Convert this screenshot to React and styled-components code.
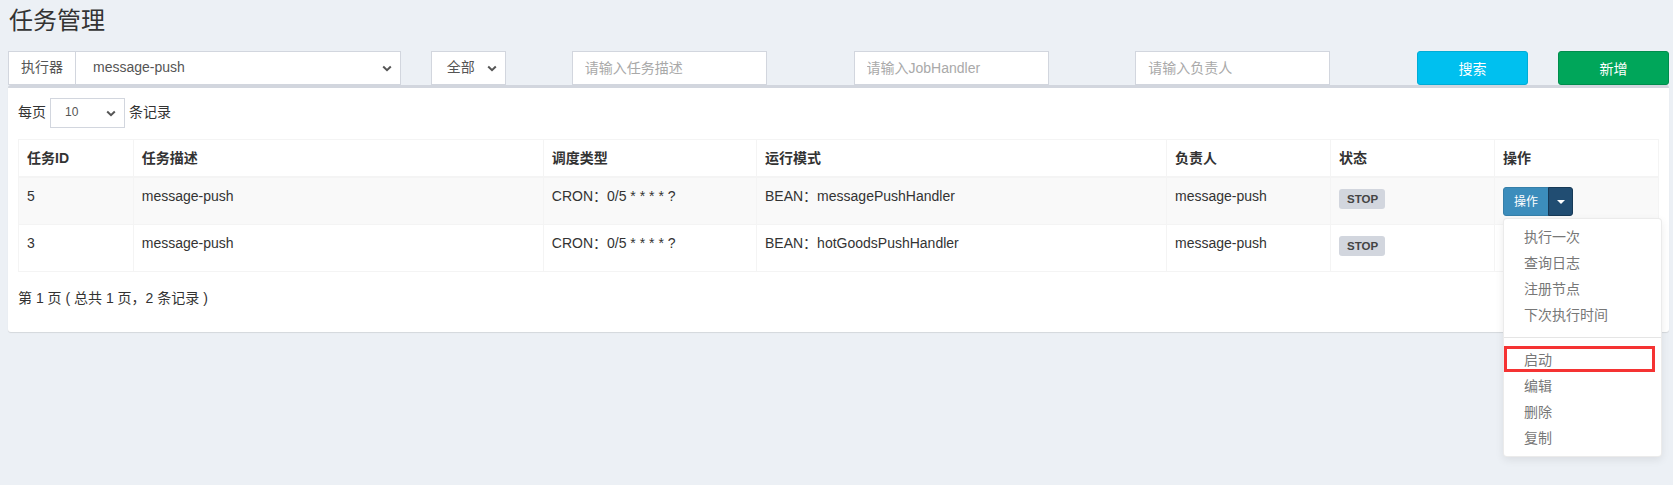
import React from 'react';
import styled, { createGlobalStyle } from 'styled-components';

const GlobalStyle = createGlobalStyle`
  html, body { margin: 0; padding: 0; background: #ecf0f5; }
  body {
    font-family: "Liberation Sans", "Noto Sans CJK SC", sans-serif;
    font-size: 14px;
    line-height: 1.42857;
    color: #333;
  }
  * { box-sizing: border-box; }
`;

const Page = styled.div`
  min-height: 485px;
  padding: 0 4px 0 8px;
`;

const Header = styled.header`
  padding-top: 8px;
  margin-bottom: 17px;
`;

const Title = styled.h1`
  margin: 0;
  padding-left: 1px;
  font-size: 24px;
  line-height: 26px;
  font-weight: 400;
  color: #333;
`;

const FilterRow = styled.div`
  display: grid;
  grid-template-columns: repeat(12, minmax(0, 1fr));
  column-gap: 30px;
  height: 34px;
`;

const Col = styled.div`
  grid-column: span ${(p) => p.$span};
  display: flex;
`;

const InputGroup = styled.div`
  display: flex;
  width: 100%;
  height: 34px;
`;

const Addon = styled.span`
  display: flex;
  align-items: center;
  padding: 0 12px;
  border: 1px solid #d2d6de;
  background: #fff;
  color: #555;
  font-size: 14px;
  white-space: nowrap;
`;

const FakeSelect = styled.div`
  display: flex;
  align-items: center;
  flex: ${(p) => (p.$grow ? 1 : 'none')};
  width: ${(p) => (p.$grow ? 'auto' : `${p.$w}px`)};
  height: ${(p) => p.$h}px;
  margin-left: ${(p) => (p.$joined ? '-1px' : '0')};
  padding: 0 8px 0 ${(p) => p.$pl}px;
  border: 1px solid #d2d6de;
  background: #fff;
  color: #555;
  font-size: ${(p) => p.$fs}px;
  cursor: default;
`;

const SelectValue = styled.span`
  flex: 1;
  white-space: nowrap;
`;

const Chevron = styled.svg`
  flex: none;
  width: 10px;
  height: 7px;
`;

const TextInput = styled.input`
  width: 195px;
  height: 34px;
  padding: 6px 12px;
  border: 1px solid #d2d6de;
  background: #fff;
  font-family: inherit;
  font-size: 14px;
  color: #555;
  outline: none;
  &::placeholder { color: #a9a9a9; }
`;

const ActionButton = styled.button`
  width: 100%;
  height: 34px;
  border-radius: 3px;
  border: 1px solid ${(p) => (p.$variant === 'info' ? '#00acd6' : '#008d4c')};
  background: ${(p) => (p.$variant === 'info' ? '#00c0ef' : '#00a65a')};
  color: #fff;
  font-family: inherit;
  font-size: 14px;
  cursor: pointer;
`;

const Box = styled.section`
  background: #fff;
  border-top: 3px solid #d2d6de;
  border-radius: 3px;
  box-shadow: 0 1px 1px rgba(0, 0, 0, 0.1);
  padding: 10px;
  overflow: visible;
`;

const LengthRow = styled.div`
  display: flex;
  align-items: center;
  height: 30px;
  gap: 4px;
  color: #333;
`;

const Table = styled.table`
  width: 100%;
  margin-top: 11px;
  border-collapse: collapse;
  table-layout: fixed;
  border: 1px solid #f4f4f4;
`;

const ColDef = styled.col`
  width: ${(p) => p.$w}%;
`;

const Th = styled.th`
  text-align: left;
  padding: 8px;
  line-height: 20px;
  font-weight: 700;
  color: #333;
  border: 1px solid #f4f4f4;
  border-bottom-width: 2px;
  vertical-align: bottom;
`;

const Tr = styled.tr`
  background: ${(p) => (p.$striped ? '#f9f9f9' : '#fff')};
`;

const Td = styled.td`
  padding: 8px;
  line-height: 20px;
  color: #333;
  border: 1px solid #f4f4f4;
  vertical-align: top;
  white-space: nowrap;
  overflow: visible;
`;

const StatusLabel = styled.span`
  display: inline-block;
  margin-top: 3px;
  height: 20px;
  padding: 0 7px 0 8px;
  border-radius: 3px;
  background: #d2d6de;
  color: #444;
  font-size: 11.5px;
  font-weight: 700;
  line-height: 20px;
  vertical-align: top;
`;

const BtnGroup = styled.div`
  position: relative;
  display: inline-flex;
  margin-top: 1px;
  z-index: ${(p) => (p.$open ? 5 : 1)};
`;

const BtnMain = styled.button`
  height: 29px;
  padding: 0 10px;
  border: 1px solid #367fa9;
  border-radius: 3px 0 0 3px;
  background: #3c8dbc;
  color: #fff;
  font-family: inherit;
  font-size: 12px;
  line-height: 18px;
  cursor: pointer;
`;

const BtnCaret = styled.button`
  display: flex;
  align-items: center;
  justify-content: center;
  width: 25px;
  height: 29px;
  margin-left: -1px;
  border: 1px solid ${(p) => (p.$open ? '#173a57' : '#367fa9')};
  border-radius: 0 3px 3px 0;
  background: ${(p) => (p.$open ? '#214d72' : '#3c8dbc')};
  cursor: pointer;
  &::after {
    content: '';
    border-top: 4px solid #fff;
    border-left: 4px solid transparent;
    border-right: 4px solid transparent;
  }
`;

const Menu = styled.ul`
  position: absolute;
  top: calc(100% + 2px);
  left: 0;
  min-width: 159px;
  margin: 0;
  padding: 5px 0;
  list-style: none;
  background: #fff;
  border: 1px solid rgba(0, 0, 0, 0.08);
  border-radius: 4px;
  box-shadow: 0 3px 8px rgba(0, 0, 0, 0.08);
`;

const MenuItem = styled.li`
  position: relative;
  padding: 3px 20px;
  line-height: 20px;
  font-size: 14px;
  color: #777;
  white-space: nowrap;
  cursor: pointer;
  &::after {
    content: '';
    display: ${(p) => (p.$marked ? 'block' : 'none')};
    position: absolute;
    top: -1px;
    left: 0;
    right: 6px;
    bottom: 1px;
    border: 3px solid #f53333;
  }
`;

const Divider = styled.li`
  height: 1px;
  margin: 9px 0;
  background: #e5e5e5;
`;

const Info = styled.div`
  margin: 8px 0 6px;
  padding: 8px 0;
  line-height: 20px;
  color: #333;
`;

const ChevronIcon = () => (
  <Chevron viewBox="0 0 10 7">
    <polyline points="1.2,1.5 5,5.2 8.8,1.5" fill="none" stroke="#555" strokeWidth="2" />
  </Chevron>
);

const Select = ({ value, ...rest }) => (
  <FakeSelect {...rest}>
    <SelectValue>{value}</SelectValue>
    <ChevronIcon />
  </FakeSelect>
);

const columns = [
  { label: '任务ID', w: 7 },
  { label: '任务描述', w: 25 },
  { label: '调度类型', w: 13 },
  { label: '运行模式', w: 25 },
  { label: '负责人', w: 10 },
  { label: '状态', w: 10 },
  { label: '操作', w: 10 },
];

const rows = [
  { id: 5, desc: 'message-push', cron: 'CRON：0/5 * * * * ?', mode: 'BEAN：messagePushHandler', owner: 'message-push', open: true },
  { id: 3, desc: 'message-push', cron: 'CRON：0/5 * * * * ?', mode: 'BEAN：hotGoodsPushHandler', owner: 'message-push', open: false },
];

const menuTop = ['执行一次', '查询日志', '注册节点', '下次执行时间'];
const menuBottom = ['启动', '编辑', '删除', '复制'];

export default function App() {
  return (
    <>
      <GlobalStyle />
      <Page>
        <Header>
          <Title>任务管理</Title>
        </Header>
        <FilterRow>
          <Col $span={3}>
            <InputGroup>
              <Addon>执行器</Addon>
              <Select value="message-push" $grow $joined $h={34} $pl={17} $fs={14} />
            </InputGroup>
          </Col>
          <Col $span={1}>
            <Select value="全部" $w={75} $h={34} $pl={15} $fs={14} />
          </Col>
          <Col $span={2}>
            <TextInput placeholder="请输入任务描述" />
          </Col>
          <Col $span={2}>
            <TextInput placeholder="请输入JobHandler" />
          </Col>
          <Col $span={2}>
            <TextInput placeholder="请输入负责人" />
          </Col>
          <Col $span={1}>
            <ActionButton $variant="info">搜索</ActionButton>
          </Col>
          <Col $span={1}>
            <ActionButton $variant="success">新增</ActionButton>
          </Col>
        </FilterRow>
        <Box>
          <LengthRow>
            <span>每页</span>
            <Select value="10" $w={75} $h={30} $pl={14} $fs={12} />
            <span>条记录</span>
          </LengthRow>
          <Table>
            <colgroup>
              {columns.map((c) => (
                <ColDef key={c.label} $w={c.w} />
              ))}
            </colgroup>
            <thead>
              <tr>
                {columns.map((c) => (
                  <Th key={c.label}>{c.label}</Th>
                ))}
              </tr>
            </thead>
            <tbody>
              {rows.map((r, i) => (
                <Tr key={r.id} $striped={i % 2 === 0}>
                  <Td>{r.id}</Td>
                  <Td>{r.desc}</Td>
                  <Td>{r.cron}</Td>
                  <Td>{r.mode}</Td>
                  <Td>{r.owner}</Td>
                  <Td>
                    <StatusLabel>STOP</StatusLabel>
                  </Td>
                  <Td>
                    <BtnGroup $open={r.open}>
                      <BtnMain>操作</BtnMain>
                      <BtnCaret $open={r.open} aria-label="toggle" />
                      {r.open && (
                        <Menu>
                          {menuTop.map((m) => (
                            <MenuItem key={m}>{m}</MenuItem>
                          ))}
                          <Divider />
                          {menuBottom.map((m) => (
                            <MenuItem key={m} $marked={m === '启动'}>
                              {m}
                            </MenuItem>
                          ))}
                        </Menu>
                      )}
                    </BtnGroup>
                  </Td>
                </Tr>
              ))}
            </tbody>
          </Table>
          <Info>第 1 页 ( 总共 1 页，2 条记录 )</Info>
        </Box>
      </Page>
    </>
  );
}
